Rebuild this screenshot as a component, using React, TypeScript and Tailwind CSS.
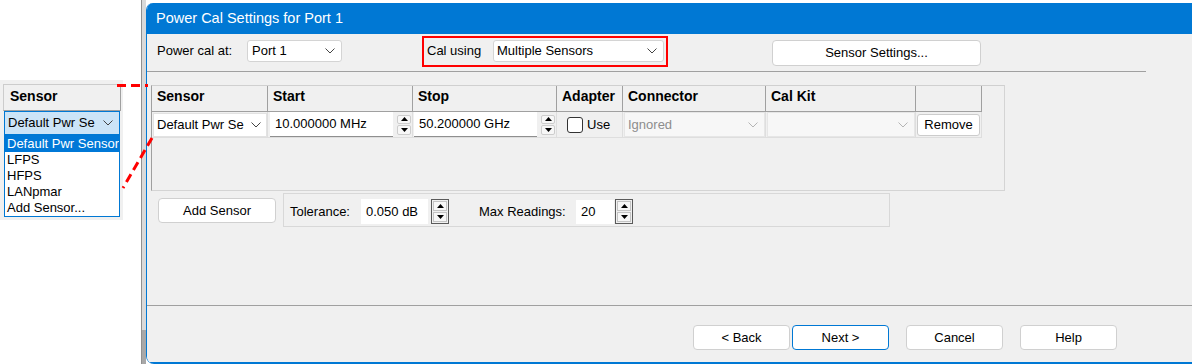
import React from "react";

const Chevron = ({ light }: { light?: boolean }) => (
  <svg width="10" height="6" viewBox="0 0 10 6" className="shrink-0">
    <polyline
      points="0.5,0.5 5,5 9.5,0.5"
      fill="none"
      stroke={light ? "#b4b4b4" : "#444444"}
      strokeWidth="1"
    />
  </svg>
);

const Tri = ({ up }: { up?: boolean }) => (
  <svg width="7" height="4" viewBox="0 0 7 4">
    <polygon points={up ? "0,4 3.5,0 7,4" : "0,0 3.5,4 7,0"} fill="#000" />
  </svg>
);

const SmallSpin = () => (
  <div className="w-[14px] h-[20px] flex flex-col gap-[1px] shrink-0">
    <div className="flex-1 border border-[#cdcdcd] rounded-[2px] bg-[#f7f7f7] flex items-center justify-center">
      <Tri up />
    </div>
    <div className="flex-1 border border-[#cdcdcd] rounded-[2px] bg-[#f7f7f7] flex items-center justify-center">
      <Tri />
    </div>
  </div>
);

const BoxSpin = () => (
  <div className="w-[18px] h-[25px] border border-[#5a5a5a] bg-[#f0f0f0] flex flex-col p-[1px] gap-[1px] shrink-0">
    <div className="flex-1 border border-[#c4c4c4] bg-[#f7f7f7] flex items-center justify-center">
      <Tri up />
    </div>
    <div className="flex-1 border border-[#c4c4c4] bg-[#f7f7f7] flex items-center justify-center">
      <Tri />
    </div>
  </div>
);

const headers: { label: string; w: string }[] = [
  { label: "Sensor", w: "w-[116px]" },
  { label: "Start", w: "w-[145px]" },
  { label: "Stop", w: "w-[144px]" },
  { label: "Adapter", w: "w-[66px]" },
  { label: "Connector", w: "w-[143px]" },
  { label: "Cal Kit", w: "w-[150px]" },
  { label: "", w: "w-[66px]" },
];

export default function App() {
  return (
    <div className="relative w-[1192px] h-[364px] overflow-hidden bg-white flex font-['Liberation_Sans',Arial,sans-serif] text-[13px] text-black">
      {/* Left callout */}
      <div className="w-[141px] shrink-0 pt-[80px]">
        <div className="w-[123px] h-[140px] bg-[#f0f0f0] pt-[4px] pl-[3px] flex flex-col">
          <div className="w-[118px] h-[27px] border border-[#cccccc] border-r-[#a0a0a0] border-b-[#a0a0a0] pl-[6px] pt-[3px] font-bold text-[14px] leading-[16px]">
            Sensor
          </div>
          <div className="ml-[1px] w-[116px] h-[24px] bg-[#cce4f7] border border-[#0078d4] flex items-center justify-between pl-[3px] pr-[6px] whitespace-nowrap">
            <span>Default Pwr Se</span>
            <Chevron />
          </div>
          <div className="ml-[1px] w-[116px] h-[82px] bg-white border border-[#0078d4] overflow-hidden flex flex-col whitespace-nowrap leading-[16px]">
            <div className="h-[16px] bg-[#0078d7] text-white pl-[2px]">Default Pwr Sensor</div>
            <div className="h-[16px] pl-[2px]">LFPS</div>
            <div className="h-[16px] pl-[2px]">HFPS</div>
            <div className="h-[16px] pl-[2px]">LANpmar</div>
            <div className="h-[16px] pl-[2px]">Add Sensor...</div>
          </div>
        </div>
      </div>

      {/* window behind */}
      <div className="w-[5px] h-full shrink-0 border-l border-[#909090] flex flex-col">
        <div className="flex-1 bg-[#d9d9d9]" />
        <div className="h-[34px] bg-[#a8a8a8]" />
      </div>

      {/* Main window */}
      <div className="mt-[3px] w-[1046px] h-[361px] shrink-0 flex flex-col border-l border-[#0078d4] rounded-tl-[7px] rounded-bl-[8px] overflow-hidden">
        <div className="h-[31px] bg-[#0078d4] text-white text-[14.5px] pl-[9px] flex items-center shrink-0">
          Power Cal Settings for Port 1
        </div>
        <div className="flex-1 bg-[#f0f0f0] border-b-2 border-[#0078d4] flex flex-col">
          {/* Row 1 */}
          <div className="mt-[2px] h-[31px] flex items-start pl-[10px] shrink-0">
            <div className="mt-[4px] h-[22px] w-[90px] flex items-center">Power cal at:</div>
            <div className="mt-[4px] w-[95px] h-[22px] bg-white border border-[#d4d4d4] rounded-[3px] pl-[4px] pr-[6px] flex items-center justify-between">
              <span>Port 1</span>
              <Chevron />
            </div>
            <div className="ml-[80px] w-[246px] h-[31px] border-2 border-[#ff0000] flex items-start pl-[3px] pt-[2px]">
              <div className="w-[66px] h-[22px] flex items-center">Cal using</div>
              <div className="w-[171px] h-[22px] bg-white border border-[#d4d4d4] rounded-[3px] pl-[3px] pr-[6px] flex items-center justify-between">
                <span>Multiple Sensors</span>
                <Chevron />
              </div>
            </div>
            <div className="ml-[104px] mt-[4px] w-[209px] h-[26px] bg-white border border-[#d0d0d0] rounded-[4px] flex items-center justify-center">
              Sensor Settings...
            </div>
          </div>

          <div className="mt-[4px] h-px w-[999px] bg-[#a0a0a0] shrink-0" />

          {/* Table */}
          <div className="mt-[13px] ml-[4px] w-[854px] h-[106px] shrink-0 border-l border-l-[#a0a0a0] border-t border-t-[#d0d0d0] border-r border-r-[#d4d4d4] border-b border-b-[#d4d4d4] flex flex-col">
            <div className="flex h-[26px] shrink-0">
              {headers.map((h, i) => (
                <div
                  key={i}
                  className={`${h.w} h-[26px] border-r border-b border-[#a0a0a0] bg-[#f0f0f0] pl-[5px] pt-[2px] font-bold text-[14px] leading-[16px]`}
                >
                  {h.label}
                </div>
              ))}
            </div>
            <div className="flex h-[26px] shrink-0">
              <div className="w-[116px] h-[26px] border-r border-b border-[#dedede] flex items-center">
                <div className="ml-[1px] w-[114px] h-[24px] bg-white border border-[#e2e2e2] pl-[3px] pr-[5px] flex items-center justify-between whitespace-nowrap">
                  <span>Default Pwr Se</span>
                  <Chevron />
                </div>
              </div>
              <div className="w-[145px] h-[26px] border-r border-b border-[#dedede] flex items-center">
                <div className="ml-[2px] w-[123px] h-[25px] bg-white border-b border-[#8f8f8f] pl-[5px] flex items-center">
                  10.000000 MHz
                </div>
                <div className="ml-[4px]">
                  <SmallSpin />
                </div>
              </div>
              <div className="w-[144px] h-[26px] border-r border-b border-[#dedede] flex items-center">
                <div className="ml-[1px] w-[123px] h-[25px] bg-white border-b border-[#8f8f8f] pl-[5px] flex items-center">
                  50.200000 GHz
                </div>
                <div className="ml-[4px]">
                  <SmallSpin />
                </div>
              </div>
              <div className="w-[66px] h-[26px] border-r border-b border-[#dedede] flex items-center">
                <div className="ml-[10px] w-[16px] h-[16px] rounded-[3px] border border-[#333333] bg-white" />
                <span className="ml-[4px]">Use</span>
              </div>
              <div className="w-[143px] h-[26px] border-r border-b border-[#dedede] flex items-center">
                <div className="ml-[1px] w-[141px] h-[25px] bg-[#f7f7f7] border border-[#e6e6e6] pl-[3px] pr-[6px] flex items-center justify-between text-[#8d8d8d]">
                  <span>Ignored</span>
                  <Chevron light />
                </div>
              </div>
              <div className="w-[150px] h-[26px] border-r border-b border-[#dedede] flex items-center">
                <div className="ml-[1px] w-[148px] h-[25px] bg-[#f7f7f7] border border-[#e6e6e6] pr-[6px] flex items-center justify-end">
                  <Chevron light />
                </div>
              </div>
              <div className="w-[66px] h-[26px] border-r border-b border-[#dedede] flex items-center">
                <div className="ml-[1px] w-[63px] h-[22px] bg-white border border-[#cccccc] rounded-[3px] flex items-center justify-center">
                  Remove
                </div>
              </div>
            </div>
            <div className="flex-1" />
          </div>

          {/* Bottom controls */}
          <div className="flex items-start h-[36px] shrink-0 pl-[11px]">
            <div className="mt-[7px] w-[118px] h-[25px] bg-white border border-[#d0d0d0] rounded-[4px] flex items-center justify-center">
              Add Sensor
            </div>
            <div className="ml-[7px] mt-[2px] w-[607px] h-[34px] border border-[#d8d8d8] flex items-start pl-[6px]">
              <div className="mt-[5px] h-[25px] w-[71px] flex items-center">Tolerance:</div>
              <div className="mt-[5px] w-[67px] h-[25px] bg-white pl-[5px] flex items-center">0.050 dB</div>
              <div className="mt-[5px] ml-[3px]">
                <BoxSpin />
              </div>
              <div className="ml-[30px] mt-[5px] h-[25px] w-[97px] flex items-center">Max Readings:</div>
              <div className="mt-[6px] w-[38px] h-[24px] bg-white pl-[5px] flex items-center">20</div>
              <div className="mt-[5px] ml-[1px]">
                <BoxSpin />
              </div>
            </div>
          </div>

          <div className="mt-[78px] h-px w-full bg-[#a0a0a0] shrink-0" />

          <div className="mt-[19px] flex pl-[546px] shrink-0">
            <div className="w-[97px] h-[25px] bg-white border border-[#d0d0d0] rounded-[4px] flex items-center justify-center">
              &lt; Back
            </div>
            <div className="ml-[2px] w-[97px] h-[25px] bg-white border border-[#0078d4] rounded-[4px] flex items-center justify-center">
              Next &gt;
            </div>
            <div className="ml-[17px] w-[97px] h-[25px] bg-white border border-[#d0d0d0] rounded-[4px] flex items-center justify-center">
              Cancel
            </div>
            <div className="ml-[17px] w-[97px] h-[25px] bg-white border border-[#d0d0d0] rounded-[4px] flex items-center justify-center">
              Help
            </div>
          </div>
        </div>
      </div>

      {/* Red dashed callout lines */}
      <svg className="absolute inset-0 pointer-events-none" width="1192" height="364">
        <line x1="117" y1="85.5" x2="148" y2="85.5" stroke="#ff0000" strokeWidth="3" strokeDasharray="9 5" />
        <line x1="152" y1="138" x2="123" y2="188" stroke="#ff0000" strokeWidth="3" strokeDasharray="9 5" />
      </svg>
    </div>
  );
}
